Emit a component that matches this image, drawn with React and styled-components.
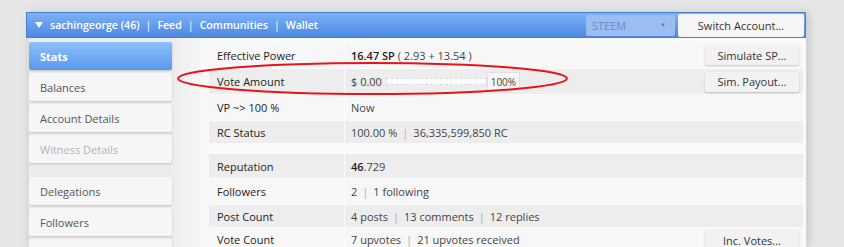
import React from "react";
import styled, { createGlobalStyle } from "styled-components";

const Global = createGlobalStyle`
  html, body { margin: 0; padding: 0; }
  body {
    background: #e6e6e6;
    font-family: "Open Sans", "Noto Sans", sans-serif;
    font-size: 11px;
    color: #333;
    width: 844px;
    height: 247px;
    overflow: hidden;
  }
`;

const Page = styled.div`
  position: relative;
  padding: 12px 0 0 26px;
`;

const Panel = styled.div`
  width: 780px;
  box-shadow: 3px 0 8px rgba(0, 0, 0, 0.13);
  background: #f3f3f3;
`;

const Header = styled.div`
  height: 26px;
  box-sizing: border-box;
  border: 1px solid #4a80d4;
  background: linear-gradient(#7db1f7, #4d88e2);
  display: flex;
  align-items: center;
  padding: 0 1px 0 8px;
`;

const Triangle = styled.span`
  width: 0;
  height: 0;
  border-left: 4.5px solid transparent;
  border-right: 4.5px solid transparent;
  border-top: 6px solid #fff;
  margin-right: 7px;
  opacity: 0.95;
`;

const NavText = styled.div`
  color: #fff;
  font-weight: 600;
  font-size: 10.6px;
  display: flex;
  gap: 6px;
  flex: 1;
`;

const Sep = styled.span`
  font-weight: 400;
`;

const Select = styled.div`
  width: 89px;
  height: 21px;
  box-sizing: border-box;
  background: #9bbdf1;
  border-radius: 2px;
  color: #6a8bc4;
  display: flex;
  align-items: center;
  justify-content: space-between;
  padding: 0 9px 0 6px;
  font-size: 11px;
  margin-right: 3px;
`;

const SmallArrow = styled.span`
  font-size: 6px;
  color: #5a7bb4;
`;

const HeadButton = styled.div`
  width: 126px;
  height: 23px;
  box-sizing: border-box;
  background: #f6f6f6;
  border-radius: 2px;
  display: flex;
  align-items: center;
  justify-content: center;
  color: #333;
  font-size: 11px;
`;

const Body = styled.div`
  display: flex;
  height: 209px;
`;

const Sidebar = styled.div`
  width: 143px;
  border-left: 3px solid #dcdcdc;
  background: #ececec;
  padding: 4px 2px 0 0;
  display: flex;
  flex-direction: column;
  gap: 3px;
  overflow: hidden;
`;

const NavItem = styled.div`
  flex-shrink: 0;
  height: 28px;
  box-sizing: border-box;
  border-radius: 2px;
  padding-left: 11px;
  display: flex;
  align-items: center;
  font-size: 11px;
  background: ${(p) => (p.$active ? "linear-gradient(#8cc0fb, #5b98ed)" : "#f6f6f6")};
  color: ${(p) => (p.$active ? "#fff" : p.$disabled ? "#b4b4b4" : "#555")};
  font-weight: ${(p) => (p.$active ? 700 : 400)};
  box-shadow: 0 1px 2px rgba(0, 0, 0, 0.18);
  margin-top: ${(p) => p.$gapTop || 0}px;
`;

const Fade = styled.div`
  width: 35px;
  background: linear-gradient(to right, #ededed, #f9f9f9);
`;

const Content = styled.div`
  flex: 1;
  background: #fafafa;
  padding: 4px 3px 0 0;
  display: flex;
  flex-direction: column;
  gap: 1px;
  overflow: hidden;
`;

const Row = styled.div`
  flex-shrink: 0;
  display: grid;
  grid-template-columns: 135px 1fr;
  gap: 1px;
  height: ${(p) => p.$h || 25}px;
  margin-top: ${(p) => p.$mt || 0}px;
`;

const Cell = styled.div`
  background: ${(p) => (p.$alt ? "#ededed" : "#f7f7f7")};
  display: flex;
  align-items: ${(p) => (p.$top ? "flex-start" : "center")};
  padding-top: ${(p) => (p.$top ? (p.$label ? 4 : 2) : 0)}px;
  box-sizing: border-box;
  padding-left: ${(p) => (p.$label ? 8 : 6)}px;
  padding-right: 4px;
  color: ${(p) => (p.$label ? "#222" : "#444")};
  white-space: nowrap;
`;

const Value = styled.div`
  flex: 1;
  display: flex;
  align-items: center;
  padding-top: ${(p) => (p.$shift ? 2 : 0)}px;
`;

const Bold = styled.b`
  font-weight: 600;
  color: #222;
`;

const Pipe = styled.span`
  color: #aaa;
  margin: 0 5px;
`;

const RowButton = styled.div`
  width: 94px;
  height: 20px;
  box-sizing: border-box;
  background: #f2f2f2;
  border-radius: 2px;
  box-shadow: 0 1px 2px rgba(0, 0, 0, 0.2);
  display: flex;
  align-items: center;
  justify-content: center;
  color: #333;
  font-size: 11px;
`;

const Track = styled.div`
  width: 99px;
  height: 5px;
  border: 1px dashed #dcdcdc;
  background: #fbfbfb;
  margin-left: 4px;
`;

const Handle = styled.div`
  width: 33px;
  height: 19px;
  box-sizing: border-box;
  border: 1px solid #e0e0e0;
  background: #f7f7f7;
  display: flex;
  align-items: center;
  justify-content: center;
  font-size: 10px;
  color: #444;
`;

const Annotation = styled.svg`
  position: absolute;
  left: 0;
  top: 0;
  pointer-events: none;
`;

export default function App() {
  return (
    <>
      <Global />
      <Page>
        <Panel>
          <Header>
            <Triangle />
            <NavText>
              <span>sachingeorge (46)</span>
              <Sep>|</Sep>
              <span>Feed</span>
              <Sep>|</Sep>
              <span>Communities</span>
              <Sep>|</Sep>
              <span>Wallet</span>
            </NavText>
            <Select>
              <span>STEEM</span>
              <SmallArrow>▼</SmallArrow>
            </Select>
            <HeadButton>Switch Account...</HeadButton>
          </Header>
          <Body>
            <Sidebar>
              <NavItem $active>Stats</NavItem>
              <NavItem>Balances</NavItem>
              <NavItem>Account Details</NavItem>
              <NavItem $disabled>Witness Details</NavItem>
              <NavItem $gapTop={11}>Delegations</NavItem>
              <NavItem>Followers</NavItem>
              <NavItem />
            </Sidebar>
            <Fade />
            <Content>
              <Row $h={26}>
                <Cell $label>Effective Power</Cell>
                <Cell>
                  <Value>
                    <Bold>16.47 SP</Bold>&nbsp;( 2.93 + 13.54 )
                  </Value>
                  <RowButton>Simulate SP...</RowButton>
                </Cell>
              </Row>
              <Row $h={25}>
                <Cell $label $alt>Vote Amount</Cell>
                <Cell $alt>
                  <Value>
                    $ 0.00
                    <Track />
                    <Handle>100%</Handle>
                  </Value>
                  <RowButton>Sim. Payout...</RowButton>
                </Cell>
              </Row>
              <Row>
                <Cell $label>VP ~&gt; 100 %</Cell>
                <Cell>Now</Cell>
              </Row>
              <Row $h={22}>
                <Cell $label $alt>RC Status</Cell>
                <Cell $alt>
                  100.00 %<Pipe>|</Pipe>36,335,599,850 RC
                </Cell>
              </Row>
              <Row $mt={10} $h={24}>
                <Cell $label $alt>Reputation</Cell>
                <Cell $alt>
                  <Bold>46</Bold>.729
                </Cell>
              </Row>
              <Row>
                <Cell $label>Followers</Cell>
                <Cell>
                  2<Pipe>|</Pipe>1 following
                </Cell>
              </Row>
              <Row $h={22}>
                <Cell $label $alt>Post Count</Cell>
                <Cell $alt>
                  4 posts<Pipe>|</Pipe>13 comments<Pipe>|</Pipe>12 replies
                </Cell>
              </Row>
              <Row $h={26}>
                <Cell $label $top>Vote Count</Cell>
                <Cell $top>
                  <Value $shift>
                    7 upvotes<Pipe>|</Pipe>21 upvotes received
                  </Value>
                  <RowButton>Inc. Votes...</RowButton>
                </Cell>
              </Row>
            </Content>
          </Body>
        </Panel>
        <Annotation width="844" height="247" viewBox="0 0 844 247">
          <ellipse
            cx="372.5"
            cy="78.5"
            rx="194.5"
            ry="15.5"
            fill="none"
            stroke="#e8141b"
            strokeWidth="2"
          />
        </Annotation>
      </Page>
    </>
  );
}
